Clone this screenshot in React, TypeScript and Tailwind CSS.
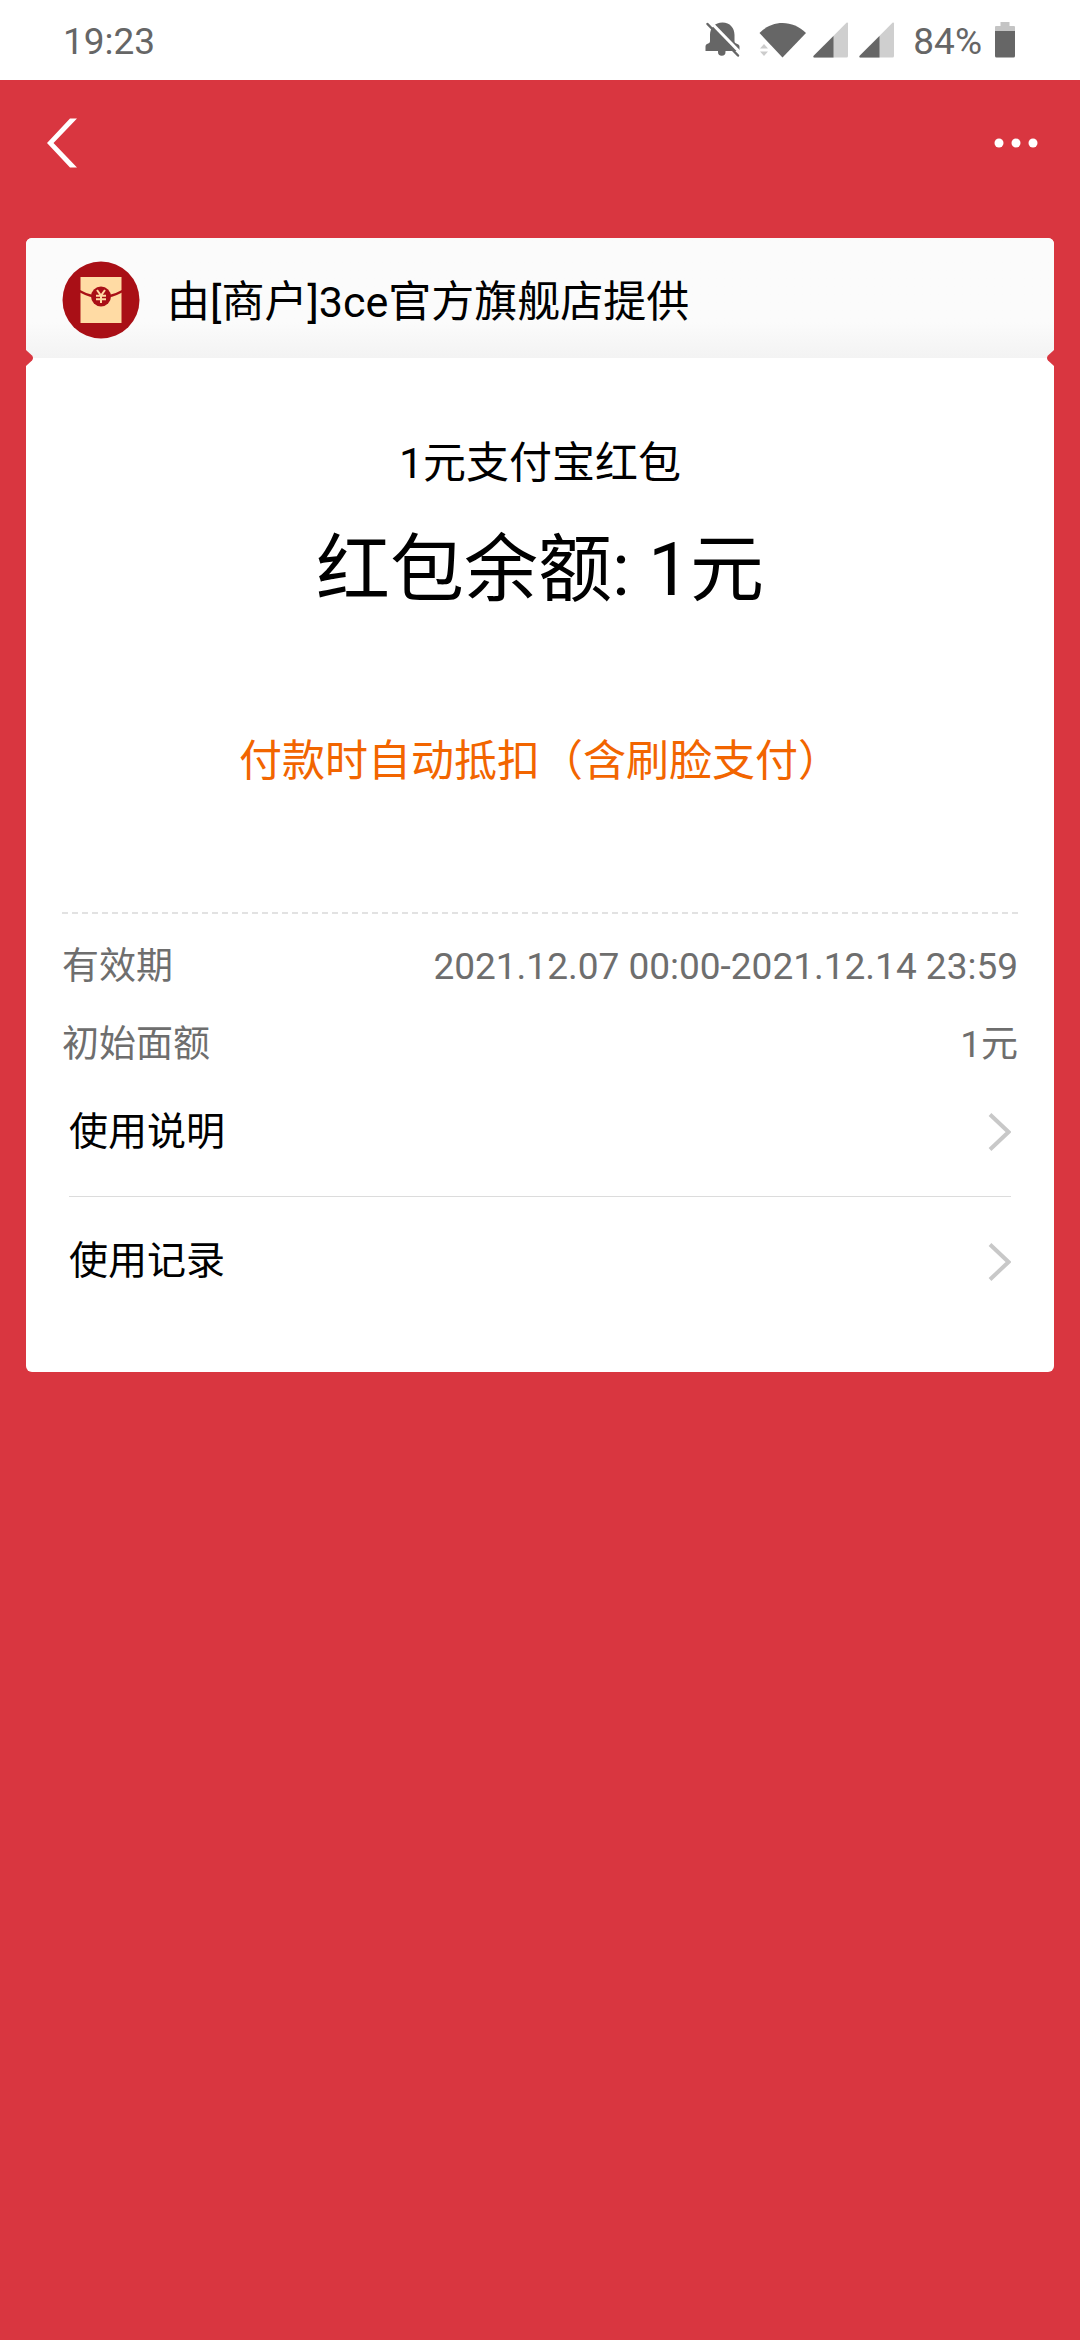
import React from "react";

function MutedBellIcon() {
  return (
    <svg width="36" height="36" viewBox="0 0 36 36" fill="none" aria-hidden="true">
      <path
        d="M13 29h7.500v1a3.750 3.750 0 0 1-7.500 0zM.5 29v-4.500c0-1.500 1-2.500 2.200-2.800 1.600-.4 2.300-1.200 2.300-2.700V13C5 6 10 .5 17.500 .5S29.500 6 29.500 13v6c0 1.500 .7 2.300 2.300 2.700 1.400 .4 2.700 1.300 2.700 2.800V29z"
        fill="#666"
      />
      <path d="M4.500 -1L36 31.500" stroke="#fff" strokeWidth="3" />
      <path d="M2.500 2L33 33.500" stroke="#666" strokeWidth="2.500" strokeLinecap="round" />
    </svg>
  );
}

function WifiIcon() {
  return (
    <svg width="48" height="36" viewBox="0 0 48 36" aria-hidden="true">
      <path d="M0.500 11C13-2.500 34-2.500 47 11L23.500 35.500z" fill="#666" />
      <path d="M1 26.500L5 22l4 4.500zM1 29.500h8L5 34z" fill="#ccc" />
    </svg>
  );
}

function SignalIcon() {
  return (
    <svg width="36" height="36" viewBox="0 0 36 36" aria-hidden="true">
      <path d="M35 1.500V34a1.500 1.500 0 0 1-1.500 1.500H1.500c-1 0-1.500-1-.8-1.800L33.500 .8c.7-.7 1.500-.3 1.500 .7z" fill="#cfcfcf" />
      <path d="M20.500 14v21.500H1.500c-1 0-1.500-1-.8-1.800z" fill="#666" />
    </svg>
  );
}

function BatteryIcon() {
  return (
    <svg width="20" height="36" viewBox="0 0 20 36" aria-hidden="true">
      <path d="M5.500 0h9v4H19a1 1 0 0 1 1 1v5H0V5a1 1 0 0 1 1-1h4.500z" fill="#c4c4c4" />
      <path d="M0 9h20v25a1.500 1.500 0 0 1-1.500 1.500h-17A1.500 1.500 0 0 1 0 34z" fill="#666" />
    </svg>
  );
}

function EnvelopeIcon() {
  return (
    <svg className="shrink-0" width="78" height="78" viewBox="0 0 78 78" fill="none" aria-hidden="true">
      <circle cx="39" cy="39" r="38.500" fill="#a90f16" />
      <path d="M18.500 16h41v46h-41z" fill="#ffdba4" />
      <path d="M17.500 30Q39 42 60.500 30" stroke="#a90f16" strokeWidth="2.500" />
      <circle cx="39" cy="35.500" r="10" fill="#a90f16" />
      <path
        d="M35 29l4 5.500 4-5.500M39 34.500V42M34 34.700h10M34 38.300h10"
        stroke="#ffdba4"
        strokeWidth="2"
      />
    </svg>
  );
}

function StatusBar() {
  return (
    <div className="flex h-[80px] items-center justify-between bg-white pr-[65px] pl-[63px] text-[37px] text-[#666]">
      <time className="pt-1">19:23</time>
      <div className="flex items-center">
        <MutedBellIcon />
        <div className="ml-[18px]">
          <WifiIcon />
        </div>
        <div className="ml-[6px] flex gap-[10px]">
          <SignalIcon />
          <SignalIcon />
        </div>
        <span className="mr-[13px] ml-[18px] pt-1">84%</span>
        <BatteryIcon />
      </div>
    </div>
  );
}

function NavBar() {
  return (
    <nav className="flex h-[126px] items-center justify-between px-[42px]">
      <button type="button" aria-label="返回" className="p-1">
        <svg width="32" height="50" viewBox="0 0 32 50" fill="none" aria-hidden="true">
          <path d="M24 .5h7L7.500 25 31 49.500h-7L1 25z" fill="#fff" />
        </svg>
      </button>
      <button type="button" aria-label="更多">
        <svg width="44" height="10" viewBox="0 0 44 10" fill="#fff" aria-hidden="true">
          <circle cx="5" cy="5" r="4.500" />
          <circle cx="22" cy="5" r="4.500" />
          <circle cx="39" cy="5" r="4.500" />
        </svg>
      </button>
    </nav>
  );
}

function InfoRow({ label, value }: { label: string; value: string }) {
  return (
    <div className="flex h-[78px] items-center justify-between text-[37px] text-[#6e6e6e]">
      <dt>{label}</dt>
      <dd>{value}</dd>
    </div>
  );
}

function LinkRow({ label }: { label: string }) {
  return (
    <button type="button" className="flex h-[129px] w-full items-center justify-between text-left text-[39px]">
      <span>{label}</span>
      <svg width="23" height="38" viewBox="0 0 23 38" fill="none" aria-hidden="true">
        <path d="M2 1.500L20.500 19 2 36.500" stroke="#c8c8c8" strokeWidth="4" />
      </svg>
    </button>
  );
}

export default function App() {
  return (
    <div className="min-h-screen bg-[#d93640] font-[Roboto,'Noto_Sans_CJK_SC',sans-serif] text-black">
      <StatusBar />
      <NavBar />
      <main className="relative mx-[26px] mt-8 overflow-hidden rounded-md bg-white">
        <header className="flex h-[120px] items-center gap-[27px] bg-linear-to-b from-[#fbfbfb] from-70% to-[#f3f3f3] px-[36px] pt-1 text-[43px]">
          <EnvelopeIcon />
          <h1 className="pt-1">由[商户]3ce官方旗舰店提供</h1>
        </header>
        <svg className="absolute top-[112px] left-0" width="8" height="16" viewBox="0 0 8 16" aria-hidden="true">
          <path d="M0 0l6 5.500q2 2.500 0 5L0 16z" fill="#d93640" />
        </svg>
        <svg className="absolute top-[112px] right-0" width="8" height="16" viewBox="0 0 8 16" aria-hidden="true">
          <path d="M8 0L2 5.500q-2 2.500 0 5L8 16z" fill="#d93640" />
        </svg>

        <section className="flex flex-col items-center pt-[73px] text-[43px]">
          <h2 className="leading-[64px]">1元支付宝红包</h2>
          <p className="mt-[20px] text-[74px] leading-[110px]">红包余额: 1元</p>
          <p className="mt-[104px] leading-[64px] text-[#f26500]">付款时自动抵扣（含刷脸支付）</p>
        </section>

        <dl className="mx-[36px] mt-[119px] border-t-2 border-dashed border-[#e2e2e2] pt-[14px]">
          <InfoRow label="有效期" value="2021.12.07 00:00-2021.12.14 23:59" />
          <InfoRow label="初始面额" value="1元" />
        </dl>

        <div className="mx-[43px] -mt-4 divide-y divide-[#dcdcdc] pb-[46px]">
          <LinkRow label="使用说明" />
          <LinkRow label="使用记录" />
        </div>
      </main>
    </div>
  );
}
